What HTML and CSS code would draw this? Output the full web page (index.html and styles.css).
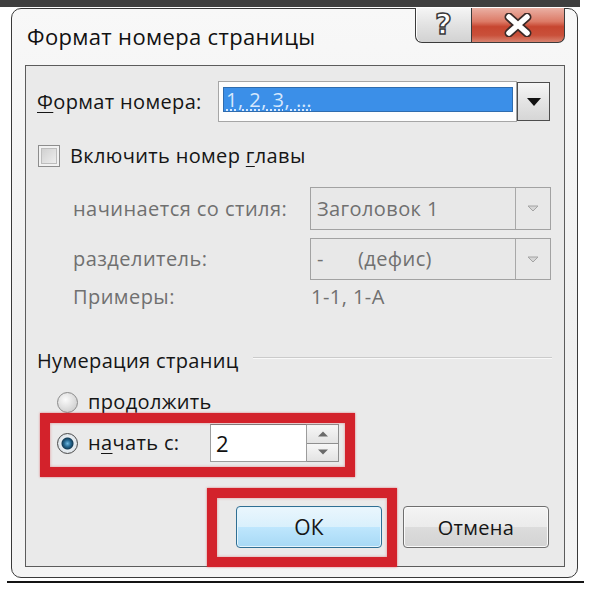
FILE: index.html
```html
<!DOCTYPE html>
<html lang="ru">
<head>
<meta charset="utf-8">
<title>Формат номера страницы</title>
<link rel="stylesheet" href="styles.css">
</head>
<body>
<div class="screen">
  <div class="topband"></div>
  <div class="window">
    <div class="titlebar">
      <div class="title">Формат номера страницы</div>
      <div class="caption-buttons">
        <div class="cbtn help"><span class="qmark">?</span></div>
        <div class="cbtn close">
          <svg width="32" height="24" viewBox="0 0 32 24">
            <path d="M7 4 L25 20 M25 4 L7 20" stroke="#3a2a28" stroke-width="9" stroke-linecap="round"/>
            <path d="M7 4 L25 20 M25 4 L7 20" stroke="#ffffff" stroke-width="5.5" stroke-linecap="round"/>
          </svg>
        </div>
      </div>
    </div>
    <div class="client">
      <div class="row fmt-row">
        <span class="lbl fmt-lbl"><u>Ф</u>ормат номера:</span>
        <div class="combo active">
          <div class="combo-field"><span class="sel"><span class="sel-text">1, 2, 3, …</span></span></div>
          <div class="combo-btn">
            <svg width="14" height="8" viewBox="0 0 14 8"><path d="M0 0 H14 L7 8 Z" fill="#111"/></svg>
          </div>
        </div>
      </div>
      <div class="row check-row">
        <span class="checkbox"></span>
        <span class="lbl">Включить номер <u>г</u>лавы</span>
      </div>
      <div class="row sub-row first">
        <span class="lbl dis sub-lbl">начинается со стиля:</span>
        <div class="combo disabled">
          <div class="combo-field dis">Заголовок 1</div>
          <div class="combo-btn dis-btn">
            <svg width="12" height="7" viewBox="0 0 12 7"><path d="M1 1 H11 L6 6 Z" fill="#d6d6d6" stroke="#a4a4a4" stroke-width="1"/></svg>
          </div>
        </div>
      </div>
      <div class="row sub-row second">
        <span class="lbl dis sub-lbl">разделитель:</span>
        <div class="combo disabled">
          <div class="combo-field dis"><span class="dash">-</span><span>(дефис)</span></div>
          <div class="combo-btn dis-btn">
            <svg width="12" height="7" viewBox="0 0 12 7"><path d="M1 1 H11 L6 6 Z" fill="#d6d6d6" stroke="#a4a4a4" stroke-width="1"/></svg>
          </div>
        </div>
      </div>
      <div class="row sample-row">
        <span class="lbl dis sub-lbl">Примеры:</span>
        <span class="lbl dis sample">1-1, 1-A</span>
      </div>
      <div class="row group-row">
        <span class="lbl">Нумерация страниц</span>
        <span class="rule"></span>
      </div>
      <div class="row radio-row first">
        <span class="radio"></span>
        <span class="lbl">продолжить</span>
      </div>
      <div class="row radio-row second">
        <span class="radio on"></span>
        <span class="lbl start-lbl">н<u>а</u>чать с:</span>
        <div class="spin">
          <div class="spin-field">2</div>
          <div class="spin-btns">
            <div class="spin-btn"><svg width="12" height="6" viewBox="0 0 12 6"><path d="M1 5.5 L6 0.5 L11 5.5 Z" fill="#6a6a6a"/></svg></div>
            <div class="spin-btn"><svg width="12" height="6" viewBox="0 0 12 6"><path d="M1 0.5 H11 L6 5.5 Z" fill="#6a6a6a"/></svg></div>
          </div>
        </div>
      </div>
      <div class="row buttons-row">
        <div class="btn default">ОК</div>
        <div class="btn">Отмена</div>
      </div>
      <div class="mark mark-start"></div>
      <div class="mark mark-ok"></div>
    </div>
  </div>
  <div class="baseline"></div>
</div>
</body>
</html>
```
FILE: styles.css
```css
* { box-sizing: border-box; }
html, body { margin: 0; padding: 0; background: #ffffff; }
body { font-family: "Open Sans", "Noto Sans", "DejaVu Sans", sans-serif; color: #151515; }

.screen { width: 592px; height: 592px; overflow: hidden; background: #ffffff; }

.topband { width: 580px; height: 7px; background: #3f3f3f; }

.window {
  margin: 1px 0 0 11px;
  width: 567px;
  height: 570px;
  border: 1px solid #3a3a3a;
  border-radius: 10px;
  background: linear-gradient(#f8f8f8, #efefef 60%, #f4f4f4);
  display: flex;
  flex-direction: column;
}

.baseline { margin: 3px 0 0 7px; width: 577px; height: 2px; background: #141414; }

.titlebar { height: 56px; display: flex; align-items: flex-start; padding: 0 12px 0 15px; }
.title { margin-top: 12px; font-size: 22px; line-height: 30px; color: #111; letter-spacing: 0.35px; white-space: nowrap; }
.caption-buttons { margin-left: auto; margin-top: -1px; display: flex; }
.cbtn { height: 35px; border: 1px solid #3b3b3b; border-top: none; display: flex; align-items: center; justify-content: center; }
.help { width: 56px; border-right: none; border-bottom-left-radius: 7px; background: linear-gradient(#f5f5f5, #e2e2e2 50%, #d2d2d2); box-shadow: inset 1px 0 0 #fff; }
.qmark { font-family: "DejaVu Sans", sans-serif; font-weight: bold; font-size: 29px; line-height: 1; color: #ffffff; -webkit-text-stroke: 1.5px #3a3a3a; margin-top: -1px; }
.close { width: 94px; border-bottom-right-radius: 7px; background: linear-gradient(#eab0a4, #dc7a66 40%, #c74630 55%, #c9503a 80%, #d8826f); }

.client {
  position: relative;
  margin-left: 13px;
  width: 540px;
  height: 502px;
  border: 1px solid #5c5c5c;
  background: #eaeaea;
  display: flex;
  flex-direction: column;
}

.row { display: flex; align-items: center; }
.lbl { font-size: 20px; line-height: 22px; letter-spacing: 0.35px; white-space: nowrap; }
.lbl u { text-decoration-thickness: 1px; text-underline-offset: 3px; }
.dis { color: #707070; letter-spacing: 0.45px; }

.fmt-row { margin-top: 15px; padding-left: 11px; height: 41px; }
.fmt-lbl { flex: 0 0 181px; }

.combo { display: flex; height: 41px; }
.combo-field { border: 1px solid #a6a6a6; background: #fdfdfd; }
.active .combo-field { width: 299px; padding: 5px 3px 9px 4px; display: flex; }
.sel { flex: 1; background: #3b8fe8; border: 1px solid #2f6cae; display: flex; align-items: center; padding-left: 2px; }
.sel-text { font-size: 20px; line-height: 22px; color: #d6e8fd; text-decoration: underline; text-decoration-style: dotted; text-underline-offset: 3px; letter-spacing: 0.5px; }
.combo-btn { width: 33px; display: flex; align-items: center; justify-content: center; }
.active .combo-btn { margin: 1px 0; border: 1px solid #4d4d4d; background: linear-gradient(#f6f6f6, #e4e4e4 50%, #d6d6d6); }

.check-row { margin-top: 23px; padding-left: 12px; height: 22px; }
.checkbox { flex: 0 0 22px; height: 22px; border: 1px solid #8d8d8d; background: linear-gradient(135deg, #cacaca, #f4f4f4); box-shadow: inset 0 0 0 2px #f2f2f2, inset 0 0 0 3px #bdbdbd; margin-right: 10px; }

.sub-row { padding-left: 47px; }
.sub-row.first { margin-top: 20px; }
.sub-row.second { margin-top: 8px; }
.sub-lbl { flex: 0 0 237px; }
.disabled { height: 43px; width: 241px; border: 1px solid #a2a2a2; background: #e8e8e8; }
.sub-row.second .disabled { height: 42px; }
.combo-field.dis { flex: 1; border: none; border-right: 1px solid #a8a8a8; background: transparent; font-size: 20px; line-height: 22px; letter-spacing: 0.4px; display: flex; align-items: center; padding-left: 6px; }
.dash { flex: 0 0 41px; }
.dis-btn { width: 34px; }

.sample-row { margin-top: 6px; padding-left: 47px; height: 22px; }
.sample { padding-left: 1px; }

.group-row { margin-top: 41px; padding-left: 11px; height: 24px; }
.rule { flex: 1; margin: -6px 12px 0 14px; height: 2px; border-top: 1px solid #cbcbcb; border-bottom: 1px solid #f9f9f9; }

.radio-row { padding-left: 31px; }
.radio-row.first { margin-top: 18px; height: 22px; }
.radio-row.second { margin-top: 11px; height: 38px; }
.radio { flex: 0 0 21px; height: 21px; border-radius: 50%; border: 1px solid #8a8a8a; background: radial-gradient(circle at 40% 35%, #fbfbfb, #d4d4d4 70%, #c2c2c2); margin-right: 10px; }
.radio.on { border-color: #4a4a4a; background: radial-gradient(circle, #6fb8e0 0, #2a6f99 3px, #133d58 5.5px, #e9eef2 6.5px, #cfd6dc 100%); }
.start-lbl { flex: 0 0 122px; }

.spin { display: flex; height: 38px; }
.spin-field { width: 97px; border: 1px solid #9c9c9c; border-top-color: #7d7d7d; background: #ffffff; font-size: 22px; line-height: 36px; padding-left: 5px; color: #111; }
.spin-btns { width: 32px; border: 1px solid #8f8f8f; border-left: none; display: flex; flex-direction: column; background: #f1f1f1; }
.spin-btn { flex: 1; display: flex; align-items: center; justify-content: center; background: linear-gradient(#f7f7f7, #e3e3e3); }
.spin-btn + .spin-btn { border-top: 1px solid #8f8f8f; }

.buttons-row { margin-top: 44px; padding-right: 15px; justify-content: flex-end; gap: 21px; }
.btn { width: 146px; height: 42px; border: 1px solid #6f6f6f; border-radius: 4px; background: linear-gradient(#f4f4f4, #ebebeb 50%, #dcdcdc 51%, #d3d3d3); box-shadow: inset 0 0 0 1px #fafafa; display: flex; align-items: center; justify-content: center; font-size: 20px; letter-spacing: 0.3px; color: #151515; }
.btn.default { border-color: #2f6f94; background: linear-gradient(#eaf6fd, #d9f0fc 50%, #bee6fd 51%, #a7d9f5); box-shadow: inset 0 0 0 1px #e5f5fd; font-size: 21px; }

.mark { position: absolute; border: 10px solid #d3222b; box-shadow: 0 0 2px rgba(211, 34, 43, 0.6), inset 0 0 3px rgba(211, 34, 43, 0.45); pointer-events: none; }
.mark-start { left: 14px; top: 347px; width: 315px; height: 64px; }
.mark-ok { left: 181px; top: 422px; width: 190px; height: 79px; }
```
